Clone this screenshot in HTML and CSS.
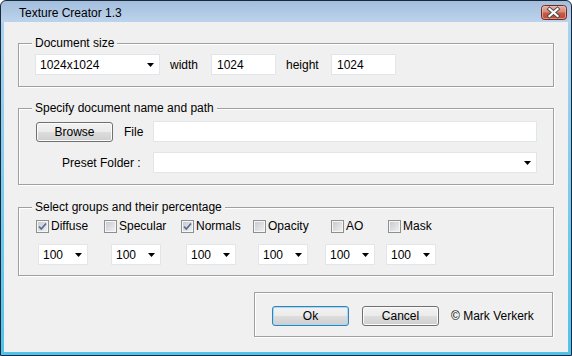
FILE: index.html
```html
<!DOCTYPE html>
<html>
    <head>
        <title>Texture Creator 1.3</title>
        <link rel="stylesheet" href="styles.css">
    </head>
    <body>
        <div class="window">
            <div class="titlebar">
                <span class="title">Texture Creator 1.3</span>
                <svg class="close" width="26" height="15" viewBox="0 0 26 15">
                    <defs>
                        <linearGradient id="closeFill" x1="0" y1="0" x2="0" y2="1">
                            <stop offset="0" stop-color="#e9b2a6"/>
                            <stop offset="0.45" stop-color="#d98a78"/>
                            <stop offset="0.55" stop-color="#c75a45"/>
                            <stop offset="1" stop-color="#c24a34"/>
                        </linearGradient>
                    </defs>
                    <rect x="0.5" y="0.5" width="25" height="14" rx="3" fill="url(#closeFill)" stroke="#6e2b22"/>
                    <rect x="1.5" y="1.5" width="23" height="12" rx="2" fill="none" stroke="#efc3b8" stroke-opacity="0.6"/>
                    <path d="M8.5 4 L16.5 11 M16.5 4 L8.5 11" stroke="#4a4a4a" stroke-width="4" stroke-linecap="square"/>
                    <path d="M8.5 4 L16.5 11 M16.5 4 L8.5 11" stroke="#ffffff" stroke-width="2.2" stroke-linecap="square"/>
                </svg>
            </div>

            <div class="client">
                <fieldset class="group groupSize">
                    <legend>Document size</legend>
                    <div class="sizeRow">
                        <div class="select selectSize">1024x1024<svg class="arrow" width="7" height="4" viewBox="0 0 7 4"><path d="M0 0 H7 L3.5 4 Z" fill="#000"/></svg></div>
                        <span class="lblWidth">width</span>
                        <div class="field fieldDim">1024</div>
                        <span class="lblHeight">height</span>
                        <div class="field fieldDim">1024</div>
                    </div>
                </fieldset>

                <fieldset class="group groupPath">
                    <legend>Specify document name and path</legend>
                    <div class="pathGrid">
                        <div class="browseCell">
                            <div class="button browseButton">Browse</div>
                            <span class="lblFile">File</span>
                        </div>
                        <div class="field"></div>
                        <span class="lblPreset">Preset Folder :</span>
                        <div class="select selectPreset"><span></span><svg class="arrow" width="7" height="4" viewBox="0 0 7 4"><path d="M0 0 H7 L3.5 4 Z" fill="#000"/></svg></div>
                    </div>
                </fieldset>

                <fieldset class="group groupMaps">
                    <legend>Select groups and their percentage</legend>
                    <div class="checkRow">
                        <label class="checkItem"><span class="check checked"><svg width="11" height="11" viewBox="0 0 11 11"><path d="M2 5.5 L4.3 8 L9 2.5" fill="none" stroke="#5a6b94" stroke-width="1.7"/></svg></span>Diffuse</label>
                        <label class="checkItem"><span class="check"></span>Specular</label>
                        <label class="checkItem"><span class="check checked"><svg width="11" height="11" viewBox="0 0 11 11"><path d="M2 5.5 L4.3 8 L9 2.5" fill="none" stroke="#5a6b94" stroke-width="1.7"/></svg></span>Normals</label>
                        <label class="checkItem"><span class="check"></span>Opacity</label>
                        <label class="checkItem"><span class="check"></span>AO</label>
                        <label class="checkItem"><span class="check"></span>Mask</label>
                    </div>
                    <div class="percentRow">
                        <div class="select selectPercent">100<svg class="arrow" width="7" height="4" viewBox="0 0 7 4"><path d="M0 0 H7 L3.5 4 Z" fill="#000"/></svg></div>
                        <div class="select selectPercent">100<svg class="arrow" width="7" height="4" viewBox="0 0 7 4"><path d="M0 0 H7 L3.5 4 Z" fill="#000"/></svg></div>
                        <div class="select selectPercent">100<svg class="arrow" width="7" height="4" viewBox="0 0 7 4"><path d="M0 0 H7 L3.5 4 Z" fill="#000"/></svg></div>
                        <div class="select selectPercent">100<svg class="arrow" width="7" height="4" viewBox="0 0 7 4"><path d="M0 0 H7 L3.5 4 Z" fill="#000"/></svg></div>
                        <div class="select selectPercent">100<svg class="arrow" width="7" height="4" viewBox="0 0 7 4"><path d="M0 0 H7 L3.5 4 Z" fill="#000"/></svg></div>
                        <div class="select selectPercent">100<svg class="arrow" width="7" height="4" viewBox="0 0 7 4"><path d="M0 0 H7 L3.5 4 Z" fill="#000"/></svg></div>
                    </div>
                </fieldset>

                <div class="footer">
                    <div class="button defaultButton">Ok</div>
                    <div class="button cancelButton">Cancel</div>
                    <span class="credit">&copy; Mark Verkerk</span>
                </div>
            </div>
        </div>
    </body>
</html>
```

FILE: styles.css
```css
* {
    box-sizing: border-box;
}
body {
    margin: 0;
    font-family: "Liberation Sans", Arial, sans-serif;
    font-size: 12px;
    color: #000;
    background-color: #fff;
}
.window {
    width: 572px;
    height: 356px;
    display: flex;
    flex-direction: column;
    border: 1px solid #1b2838;
    border-radius: 6px 6px 0 0;
    background: linear-gradient(#a3bedd 0, #bcd3ec 21px, #a9d3f0 22px, #4fc3ec 100%);
}
.titlebar {
    height: 21px;
    display: flex;
    align-items: flex-start;
    justify-content: space-between;
    padding: 0 4px 0 18px;
}
.title {
    margin-top: 5px;
    line-height: 14px;
}
.close {
    display: block;
    margin-top: 4px;
}
.client {
    flex: 1;
    display: flex;
    flex-direction: column;
    margin: 0 3px 3px 3px;
    padding: 14px 14px 0 14px;
    background-color: #f0f0f0;
}

/* group boxes */
.group {
    margin: 0;
    min-width: 0;
    border: 1px solid #a0a0a0;
    box-shadow: 1px 1px 0 #fff, inset 1px 1px 0 #fff;
}
.group legend {
    margin-left: -3px;
    padding: 0 3px;
    line-height: 14px;
    background-color: #f0f0f0;
}
.groupSize {
    padding: 4px 16px 11px 16px;
}
.groupPath {
    margin-top: 14px;
    padding: 6px 16px 11px 16px;
}
.groupMaps {
    margin-top: 15px;
    padding: 4px 16px 10px 16px;
}

/* inputs */
.field {
    height: 21px;
    display: flex;
    align-items: center;
    padding-left: 5px;
    background-color: #fff;
    border: 1px solid #e1e6eb;
}
.select {
    height: 21px;
    display: flex;
    align-items: center;
    justify-content: space-between;
    padding: 0 5px 0 4px;
    background-color: #fff;
    border: 1px solid #e1e6eb;
}
.arrow {
    display: block;
}

.sizeRow {
    display: flex;
    align-items: center;
}
.selectSize {
    width: 125px;
}
.lblWidth {
    margin-left: 10px;
    width: 41px;
}
.lblHeight {
    margin-left: 10px;
    width: 45px;
}
.fieldDim {
    width: 65px;
}

.pathGrid {
    display: grid;
    grid-template-columns: 118px 1fr;
    row-gap: 10px;
    align-items: center;
}
.browseCell {
    display: flex;
    align-items: center;
    padding-left: 1px;
}
.browseButton {
    width: 78px;
    height: 21px;
}
.lblFile {
    margin-left: 11px;
}
.lblPreset {
    padding-left: 27px;
}

/* check boxes */
.checkRow {
    display: grid;
    grid-template-columns: 68px 77px 72px 78px 57px auto;
    padding-left: 1px;
    height: 16px;
    align-items: center;
}
.checkItem {
    display: flex;
    align-items: center;
}
.check {
    width: 13px;
    height: 13px;
    margin-right: 2px;
    border: 1px solid #8e8f8f;
    background: linear-gradient(135deg, #c3c7cd, #f3f3f3);
    box-shadow: inset 0 0 0 1px #f6f6f6;
}
.check svg {
    display: block;
}
.percentRow {
    display: grid;
    grid-template-columns: 73px 75px 72px 67px 61px auto;
    padding-left: 3px;
    margin-top: 10px;
}
.selectPercent {
    width: 50px;
}

/* buttons */
.button {
    width: 77px;
    height: 20px;
    display: flex;
    align-items: center;
    justify-content: center;
    border: 1px solid #707070;
    border-radius: 3px;
    background: linear-gradient(#f2f2f2 0, #ebebeb 50%, #dddddd 50%, #cfcfcf 100%);
    box-shadow: inset 0 0 0 1px #fbfbfb;
    user-select: none;
}
.defaultButton {
    border-color: #3c7fb1;
    box-shadow: inset 0 0 0 1px #9fdcf6;
}
.cancelButton {
    margin-left: 13px;
}
.footer {
    align-self: flex-end;
    width: 299px;
    height: 45px;
    margin: 16px 1px 0 0;
    padding: 13px 0 0 17px;
    display: flex;
    align-items: flex-start;
    border: 1px solid #a0a0a0;
    box-shadow: 1px 1px 0 #fff, inset 1px 1px 0 #fff;
}
.credit {
    margin-left: 12px;
    line-height: 20px;
}
```
